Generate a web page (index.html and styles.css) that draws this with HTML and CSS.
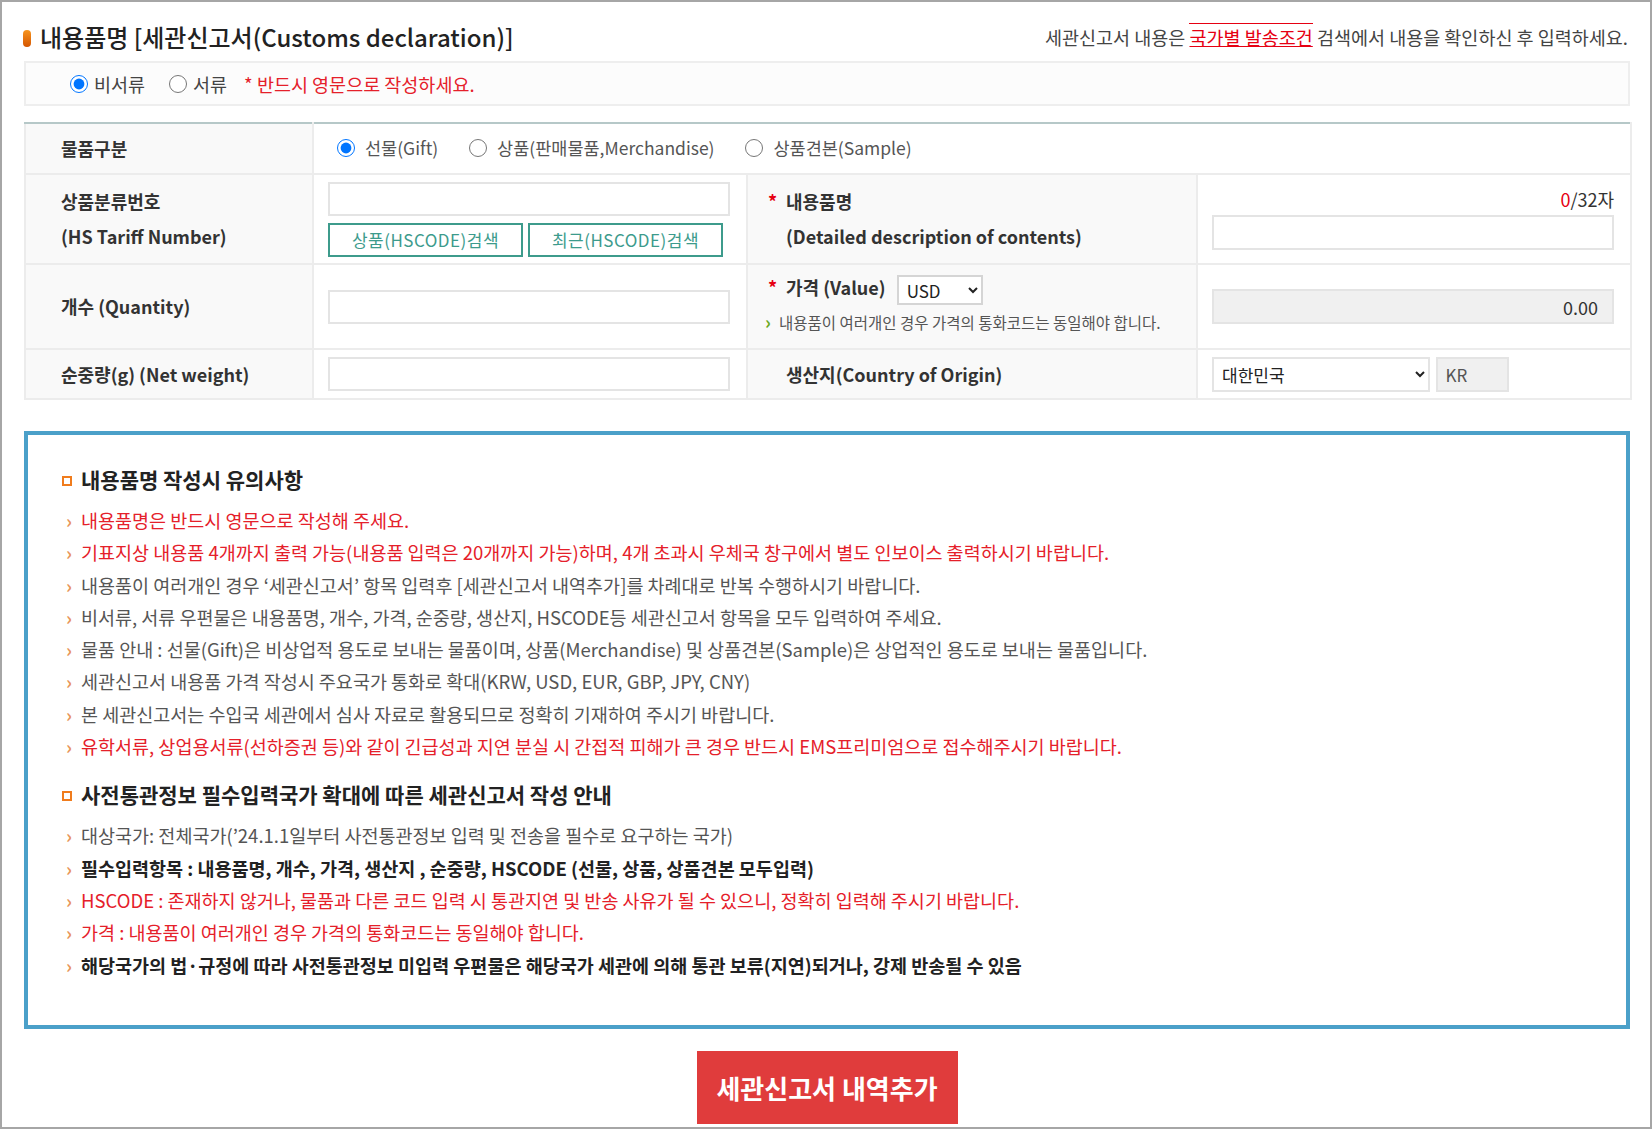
FILE: index.html
```html
<!DOCTYPE html>
<html>
<head>
  <meta charset="utf-8">
  <title>세관신고서</title>
  <link rel="stylesheet" href="styles.css">
</head>
<body>
  <div class="frame">
    <div class="head">
      <h2 class="title"><span class="bar"></span>내용품명 [세관신고서(Customs declaration)]</h2>
      <p class="head-note">세관신고서 내용은 <a href="#">국가별 발송조건</a> 검색에서 내용을 확인하신 후 입력하세요.</p>
    </div>

    <div class="type-box">
      <label><input type="radio" name="docType" checked>비서류</label>
      <label><input type="radio" name="docType">서류</label>
      <span class="warn">* 반드시 영문으로 작성하세요.</span>
    </div>

    <table class="form-table">
      <colgroup>
        <col style="width: 288px">
        <col style="width: 434px">
        <col style="width: 450px">
        <col style="width: 434px">
      </colgroup>
      <tr class="row-kind">
        <th>물품구분</th>
        <td colspan="3" class="kinds">
          <label><input type="radio" name="kind" checked>선물(Gift)</label>
          <label><input type="radio" name="kind">상품(판매물품,Merchandise)</label>
          <label><input type="radio" name="kind">상품견본(Sample)</label>
        </td>
      </tr>
      <tr class="row-hs">
        <th>상품분류번호<br>(HS Tariff Number)</th>
        <td>
          <input type="text" class="txt">
          <div class="btns">
            <button type="button" class="btn-line">상품(HSCODE)검색</button>
            <button type="button" class="btn-line">최근(HSCODE)검색</button>
          </div>
        </td>
        <th class="sub"><span class="req">*</span>내용품명<br>(Detailed description of contents)</th>
        <td class="last">
          <p class="count"><em>0</em>/32자</p>
          <input type="text" class="txt">
        </td>
      </tr>
      <tr class="row-qty">
        <th>개수 (Quantity)</th>
        <td><input type="text" class="txt"></td>
        <th class="sub price">
          <span class="req">*</span>가격 (Value)
          <select class="cur"><option>USD</option></select>
          <p class="tip">내용품이 여러개인 경우 가격의 통화코드는 동일해야 합니다.</p>
        </th>
        <td class="last"><input type="text" class="txt readonly" value="0.00" readonly></td>
      </tr>
      <tr class="row-weight">
        <th>순중량(g) (Net weight)</th>
        <td><input type="text" class="txt"></td>
        <th class="sub">생산지(Country of Origin)</th>
        <td class="last">
          <select class="country"><option>대한민국</option></select>
          <input type="text" class="code" value="KR" readonly>
        </td>
      </tr>
    </table>

    <div class="notice">
      <h3>내용품명 작성시 유의사항</h3>
      <ul>
        <li class="red">내용품명은 반드시 영문으로 작성해 주세요.</li>
        <li class="red">기표지상 내용품 4개까지 출력 가능(내용품 입력은 20개까지 가능)하며, 4개 초과시 우체국 창구에서 별도 인보이스 출력하시기 바랍니다.</li>
        <li>내용품이 여러개인 경우 ‘세관신고서’ 항목 입력후 [세관신고서 내역추가]를 차례대로 반복 수행하시기 바랍니다.</li>
        <li>비서류, 서류 우편물은 내용품명, 개수, 가격, 순중량, 생산지, HSCODE등 세관신고서 항목을 모두 입력하여 주세요.</li>
        <li>물품 안내 : 선물(Gift)은 비상업적 용도로 보내는 물품이며, 상품(Merchandise) 및 상품견본(Sample)은 상업적인 용도로 보내는 물품입니다.</li>
        <li>세관신고서 내용품 가격 작성시 주요국가 통화로 확대(KRW, USD, EUR, GBP, JPY, CNY)</li>
        <li>본 세관신고서는 수입국 세관에서 심사 자료로 활용되므로 정확히 기재하여 주시기 바랍니다.</li>
        <li class="red">유학서류, 상업용서류(선하증권 등)와 같이 긴급성과 지연 분실 시 간접적 피해가 큰 경우 반드시 EMS프리미엄으로 접수해주시기 바랍니다.</li>
      </ul>
      <h3>사전통관정보 필수입력국가 확대에 따른 세관신고서 작성 안내</h3>
      <ul>
        <li>대상국가: 전체국가(’24.1.1일부터 사전통관정보 입력 및 전송을 필수로 요구하는 국가)</li>
        <li class="strong">필수입력항목 : 내용품명, 개수, 가격, 생산지 , 순중량, HSCODE (선물, 상품, 상품견본 모두입력)</li>
        <li class="red">HSCODE : 존재하지 않거나, 물품과 다른 코드 입력 시 통관지연 및 반송 사유가 될 수 있으니, 정확히 입력해 주시기 바랍니다.</li>
        <li class="red">가격 : 내용품이 여러개인 경우 가격의 통화코드는 동일해야 합니다.</li>
        <li class="strong">해당국가의 법·규정에 따라 사전통관정보 미입력 우편물은 해당국가 세관에 의해 통관 보류(지연)되거나, 강제 반송될 수 있음</li>
      </ul>
    </div>

    <button type="button" class="btn-add">세관신고서 내역추가</button>
  </div>
</body>
</html>
```

FILE: styles.css
```css
*, *::before, *::after { box-sizing: border-box; margin: 0; padding: 0; }
body {
  font-family: "Noto Sans CJK KR", "Noto Sans", sans-serif;
  color: #333;
  background: #fff;
}

.frame {
  height: 1129px;
  border: 2px solid #a6a6a6;
  padding: 0 20px 0 22px;
}

/* title row */
.head {
  height: 59px;
  padding-top: 20px;
  display: flex;
  justify-content: space-between;
  align-items: flex-start;
}

.title {
  display: flex;
  align-items: center;
  font-size: 24px;
  font-weight: 500;
  line-height: 30px;
  color: #222;
}

.title .bar {
  width: 8px;
  height: 17px;
  margin: 2px 9px 0 -1px;
  border-radius: 4px;
  background: linear-gradient(#f7941d, #d45500);
}

.head-note {
  margin-right: 2px;
  font-size: 18.5px;
  line-height: 30px;
  color: #444;
}

.head-note a {
  color: #e60012;
  text-decoration: underline;
  border-top: 1px solid #e60012;
}

/* document type */
.type-box {
  height: 45px;
  margin-bottom: 16px;
  padding-left: 44px;
  display: flex;
  align-items: center;
  border: 2px solid #eeeeee;
  background: #fcfcfc;
  font-size: 18.5px;
  color: #444;
}

.type-box label {
  display: flex;
  align-items: center;
  margin-right: 24px;
}

input[type="radio"] {
  width: 18px;
  height: 18px;
  margin: 0 6px 0 0;
}

.warn {
  margin-left: -7px;
  font-size: 18.5px;
  color: #e5202a;
}

/* form table */
.form-table {
  width: 100%;
  border-collapse: collapse;
  table-layout: fixed;
}

.form-table th,
.form-table td {
  border: 2px solid #ececec;
  vertical-align: middle;
}

.form-table tr:first-child > * {
  border-top-color: #b6c8c8;
}

.form-table th {
  background: #f9f9f9;
  text-align: left;
  padding-left: 35px;
  font-size: 18px;
  font-weight: 700;
  line-height: 35px;
  color: #333;
}

.form-table td {
  padding: 0 14px;
}

.row-kind { height: 51px; }
.row-hs { height: 90px; }
.row-qty { height: 85px; }
.row-weight { height: 50px; }

.kinds {
  font-size: 17.5px;
  color: #555;
}

.kinds label {
  display: inline-flex;
  align-items: center;
  margin: 0 27px 0 9px;
}

.kinds input[type="radio"] {
  margin-right: 10px;
}

.kinds label + label {
  margin-left: 0;
}

.txt {
  display: block;
  width: 402px;
  height: 34px;
  border: 2px solid #e4e4e4;
  background: #fff;
  font-family: inherit;
  font-size: 18px;
  padding: 0 10px;
}

.btns {
  display: flex;
  gap: 5px;
  margin-top: 7px;
}

.btn-line {
  width: 195px;
  height: 34px;
  border: 2px solid #3d9b8c;
  background: #fff;
  color: #3d9b8c;
  font-family: inherit;
  font-size: 17px;
  letter-spacing: 0.5px;
}

.form-table th.sub {
  padding-left: 38px;
}

.form-table th.price {
  padding-bottom: 9px;
}

.req {
  display: inline-block;
  width: 18px;
  margin-left: -18px;
  color: #e60012;
}

.cur {
  width: 86px;
  height: 30px;
  margin-left: 7px;
  padding-left: 4px;
  border: 2px solid #d5d5d5;
  background: #fff;
  font-family: inherit;
  font-size: 17px;
  font-weight: 400;
  color: #222;
  vertical-align: middle;
}

.tip {
  margin: 4px 0 0 -21px;
  font-size: 15.5px;
  font-weight: 400;
  line-height: 24px;
  color: #555;
}

.tip::before {
  content: "›";
  display: inline-block;
  width: 14px;
  font-size: 18px;
  color: #6aa823;
  font-weight: 700;
}

.last {
  padding-right: 14px;
}

.count {
  text-align: right;
  font-size: 18px;
  line-height: 22px;
  margin: 0 2px 5px 0;
}

.count em {
  font-style: normal;
  color: #e60012;
}

.last .txt {
  height: 35px;
}

.txt.readonly {
  background: #f0f0f0;
  text-align: right;
  padding-right: 14px;
  color: #333;
}

.country {
  width: 218px;
  height: 35px;
  border: 2px solid #e4e4e4;
  background: #fff;
  padding-left: 4px;
  font-family: inherit;
  font-size: 17px;
  color: #222;
  vertical-align: middle;
}

.code {
  width: 73px;
  height: 35px;
  margin-left: 2px;
  border: 2px solid #e4e4e4;
  background: #f0f0f0;
  padding-left: 8px;
  font-family: inherit;
  font-size: 17px;
  color: #555;
  vertical-align: middle;
}

/* notice */
.notice {
  height: 598px;
  margin-top: 31px;
  padding: 29px 0 0 34px;
  border: 4px solid #4ba0c9;
}

.notice h3 {
  display: flex;
  align-items: center;
  font-size: 21px;
  font-weight: 700;
  line-height: 30px;
  color: #222;
}

.notice h3::before {
  content: "";
  width: 10px;
  height: 10px;
  margin: 4px 9px 0 0;
  border: 2px solid #f07c1d;
}

.notice h3 + ul {
  margin-top: 10px;
}

.notice ul + h3 {
  margin-top: 17px;
}

.notice ul {
  list-style: none;
}

.notice li {
  padding-left: 4px;
  font-size: 18.5px;
  line-height: 32.3px;
  color: #555;
}

.notice li::before {
  content: "›";
  display: inline-block;
  width: 15px;
  color: #e8955a;
  font-weight: 700;
}

.notice li.red { color: #e5202a; }
.notice li.strong { color: #222; font-weight: 700; }

.btn-add {
  display: block;
  width: 261px;
  height: 73px;
  margin: 22px auto 0;
  border: none;
  background: #e03c3c;
  color: #fff;
  font-family: inherit;
  font-size: 26px;
  font-weight: 700;
}
```
